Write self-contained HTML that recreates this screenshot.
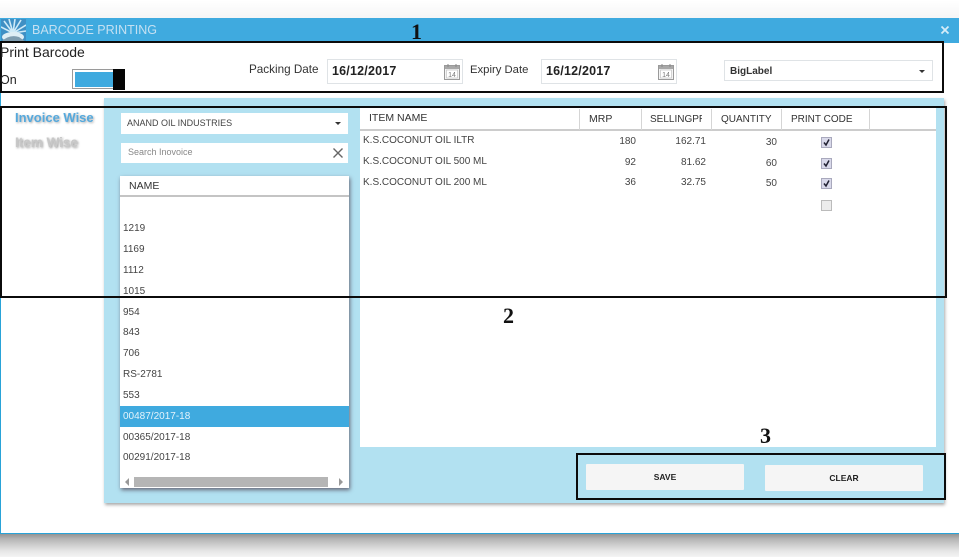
<!DOCTYPE html>
<html><head><meta charset="utf-8">
<style>
html,body{margin:0;padding:0;background:#fff}
body{width:959px;height:557px;overflow:hidden;position:relative;font-family:"Liberation Sans",sans-serif;color:#333}
#w{position:absolute;left:0;top:0;width:959px;height:557px;filter:blur(.35px)}
.a{position:absolute}
.t{position:absolute;white-space:nowrap;line-height:14px}
.box{position:absolute;border:2px solid #0b0b0b;box-sizing:border-box}
.f{position:absolute;background:#fff;border:1px solid #dfe3e6;box-sizing:border-box}
.b{font-family:"Liberation Serif",serif;font-weight:bold;font-size:22px;color:#111}
.r{font-size:10px;color:#444;left:123px}
.h{font-size:10.5px;color:#333}
.n{font-size:10px;color:#444;text-align:right;width:40px}
.item{font-size:10px;color:#444;left:363px}
.sep{position:absolute;width:1px;top:109px;height:21px;background:#d5d5d5}
.cb{position:absolute;left:821px;width:11px;height:11px;box-sizing:border-box;background:#d9d9ea;border:1px solid #a9a9bd}
.btn{position:absolute;background:#f5f5f5;height:26px;width:158px;border-radius:1px;text-align:center;font-size:8.5px;font-weight:bold;line-height:27px;color:#222}
</style></head><body><div id="w">
<div class="a" style="left:0;top:0;width:959px;height:18px;background:linear-gradient(#fff,#f5f5f6)"></div>
<div class="a" style="left:0;top:533px;width:959px;height:24px;background:linear-gradient(#8d8d8d,#b5b5b5 25%,#e6e6e6 75%,#f4f4f4)"></div>
<div class="a" style="left:0;top:18px;width:959px;height:516px;box-sizing:border-box;border:1px solid #29a3d8;border-right:none;background:#fff"></div>
<div class="a" style="left:0;top:18px;width:959px;height:25px;background:#3faadf"></div>
<svg class="a" style="left:1px;top:19px" width="25" height="23" viewBox="0 0 25 23">
<rect width="25" height="23" fill="#3f8fc4"/>
<path d="M12 14 L3 2 M12 14 L8 0 M12 14 L14 0 M12 14 L20 1 M12 14 L25 6 M12 14 L0 8 M12 14 L25 12" stroke="#cfeaf7" stroke-width="1.6"/>
<ellipse cx="12" cy="18" rx="11" ry="5" fill="#dfeef5"/>
<path d="M0 23 Q8 15 18 18 L25 23Z" fill="#7f9db0"/>
</svg>
<div class="t" style="left:32px;top:23px;font-size:12.5px;color:#c4e0f2">BARCODE PRINTING</div>
<svg class="a" style="left:940px;top:25px" width="10" height="10" viewBox="0 0 10 10"><path d="M1.5 1.5L8.5 8.5M8.5 1.5L1.5 8.5" stroke="#d5ecf8" stroke-width="1.8"/></svg>

<div class="t b" style="left:411px;top:25px">1</div>
<div class="box" style="left:0;top:41px;width:944px;height:52px"></div>

<div class="t" style="left:0;top:45px;font-size:14px;color:#222">Print Barcode</div>
<div class="t" style="left:0;top:73px;font-size:12.5px;color:#222">On</div>
<div class="a" style="left:72px;top:69px;width:50px;height:20px;border:1px solid #9a9a9a;box-sizing:border-box;background:#fff"></div>
<div class="a" style="left:75px;top:72px;width:40px;height:15px;background:#3faadf"></div>
<div class="a" style="left:113px;top:69px;width:12px;height:21px;background:#050505"></div>

<div class="t" style="left:249px;top:63px;font-size:11.7px;color:#333">Packing Date</div>
<div class="f" style="left:327px;top:59px;width:136px;height:25px"></div>
<div class="t" style="left:332px;top:64px;font-size:12.5px;font-weight:bold;letter-spacing:.2px;color:#222">16/12/2017</div>
<svg class="a" style="left:444px;top:63px" width="16" height="17" viewBox="0 0 16 17"><rect x="0.5" y="2.5" width="15" height="14" fill="#f4f4f4" stroke="#9a9a9a"/><rect x="1" y="3" width="14" height="3" fill="#a8a8a8"/><path d="M4 1v3M12 1v3" stroke="#888"/><rect x="2.5" y="7" width="11" height="8" fill="#fff" stroke="#bbb" stroke-width=".6"/><text x="8" y="14" font-size="7" text-anchor="middle" fill="#777" font-family="Liberation Sans">14</text></svg>
<div class="t" style="left:470px;top:63px;font-size:11.3px;color:#333">Expiry Date</div>
<div class="f" style="left:541px;top:59px;width:136px;height:25px"></div>
<div class="t" style="left:546px;top:64px;font-size:12.5px;font-weight:bold;letter-spacing:.2px;color:#222">16/12/2017</div>
<svg class="a" style="left:658px;top:63px" width="16" height="17" viewBox="0 0 16 17"><rect x="0.5" y="2.5" width="15" height="14" fill="#f4f4f4" stroke="#9a9a9a"/><rect x="1" y="3" width="14" height="3" fill="#a8a8a8"/><path d="M4 1v3M12 1v3" stroke="#888"/><rect x="2.5" y="7" width="11" height="8" fill="#fff" stroke="#bbb" stroke-width=".6"/><text x="8" y="14" font-size="7" text-anchor="middle" fill="#777" font-family="Liberation Sans">14</text></svg>
<div class="f" style="left:724px;top:60px;width:209px;height:21px"></div>
<div class="t" style="left:730px;top:65px;font-size:10px;font-weight:bold;color:#333">BigLabel</div>
<div class="a" style="left:919px;top:70px;border:3px solid transparent;border-top:3px solid #333;border-bottom:0"></div>

<!-- panel -->
<div class="a" style="left:104px;top:98px;width:840px;height:405px;background:#b2e1f1;box-shadow:1px 2px 3px #aaa"></div>
<div class="a" style="left:360px;top:108px;width:576px;height:339px;background:#fff"></div>

<div class="t" style="left:15px;top:111px;font-size:13px;font-weight:bold;color:#55a9dd;text-shadow:1px 1px 2px #aaa">Invoice Wise</div>
<div class="t" style="left:15px;top:136px;font-size:13.5px;font-weight:bold;color:#c8c8c8;text-shadow:1px 1px 2px #999">Item Wise</div>

<div class="a" style="left:121px;top:113px;width:227px;height:21px;background:#fff"></div>
<div class="t" style="left:127px;top:116px;font-size:9px;color:#444">ANAND OIL INDUSTRIES</div>
<div class="a" style="left:335px;top:122px;border:3px solid transparent;border-top:3px solid #333;border-bottom:0"></div>
<div class="a" style="left:121px;top:143px;width:227px;height:20px;background:#fff"></div>
<div class="t" style="left:128px;top:145px;font-size:9px;color:#888">Search Inovoice</div>
<svg class="a" style="left:332px;top:147px" width="12" height="12" viewBox="0 0 12 12"><path d="M1.5 1.5L10.5 10.5M10.5 1.5L1.5 10.5" stroke="#666" stroke-width="1.4"/></svg>

<!-- list -->
<div class="a" style="left:120px;top:176px;width:229px;height:312px;background:#fff;box-shadow:1px 2px 4px #667"></div>
<div class="a" style="left:120px;top:195px;width:229px;height:2px;background:#c4c4c4"></div>
<div class="t" style="left:129px;top:179px;font-size:10.5px;color:#333">NAME</div>
<div class="t r" style="top:222px">1219</div>
<div class="t r" style="top:243px">1169</div>
<div class="t r" style="top:264px">1112</div>
<div class="t r" style="top:285px">1015</div>
<div class="t r" style="top:306px">954</div>
<div class="t r" style="top:326px">843</div>
<div class="t r" style="top:347px">706</div>
<div class="t r" style="top:368px">RS-2781</div>
<div class="t r" style="top:389px">553</div>
<div class="a" style="left:120px;top:406px;width:229px;height:21px;background:#3faadf"></div>
<div class="t r" style="top:410px;color:#e4f3fb">00487/2017-18</div>
<div class="t r" style="top:431px">00365/2017-18</div>
<div class="t r" style="top:451px">00291/2017-18</div>
<div class="a" style="left:134px;top:477px;width:194px;height:10px;background:#b5b5b5"></div>
<div class="a" style="left:125px;top:478px;border:4px solid transparent;border-right:4px solid #999;border-left:0"></div>
<div class="a" style="left:339px;top:478px;border:4px solid transparent;border-left:4px solid #999;border-right:0"></div>

<!-- grid head -->
<div class="a" style="left:360px;top:129px;width:576px;height:2px;background:#ccc"></div>
<div class="sep" style="left:579px"></div><div class="sep" style="left:641px"></div><div class="sep" style="left:711px"></div><div class="sep" style="left:781px"></div><div class="sep" style="left:869px"></div>
<div class="t h" style="left:369px;top:111px">ITEM NAME</div>
<div class="t h" style="left:589px;top:112px">MRP</div>
<div class="t" style="left:650px;top:113px;font-size:10px;width:52px;overflow:hidden">SELLINGPRICE</div>
<div class="t" style="left:721px;top:113px;font-size:10px">QUANTITY</div>
<div class="t" style="left:791px;top:113px;font-size:10px">PRINT CODE</div>

<div class="t item" style="top:134px">K.S.COCONUT OIL ILTR</div>
<div class="t item" style="top:155px">K.S.COCONUT OIL 500 ML</div>
<div class="t item" style="top:176px">K.S.COCONUT OIL 200 ML</div>
<div class="t n" style="left:596px;top:135px">180</div><div class="t n" style="left:666px;top:135px">162.71</div><div class="t n" style="left:737px;top:136px">30</div>
<div class="t n" style="left:596px;top:156px">92</div><div class="t n" style="left:666px;top:156px">81.62</div><div class="t n" style="left:737px;top:157px">60</div>
<div class="t n" style="left:596px;top:176px">36</div><div class="t n" style="left:666px;top:176px">32.75</div><div class="t n" style="left:737px;top:177px">50</div>

<div class="cb" style="top:137px"><svg width="9" height="9" style="display:block"><path d="M2 4.5L4 7L7 1.5" fill="none" stroke="#223" stroke-width="1.5"/></svg></div>
<div class="cb" style="top:158px"><svg width="9" height="9" style="display:block"><path d="M2 4.5L4 7L7 1.5" fill="none" stroke="#223" stroke-width="1.5"/></svg></div>
<div class="cb" style="top:178px"><svg width="9" height="9" style="display:block"><path d="M2 4.5L4 7L7 1.5" fill="none" stroke="#223" stroke-width="1.5"/></svg></div>
<div class="cb" style="top:200px;background:#ececec;border-color:#bbb"></div>

<div class="box" style="left:0;top:106px;width:947px;height:192px"></div>
<div class="t b" style="left:503px;top:309px">2</div>
<div class="t b" style="left:760px;top:429px">3</div>

<div class="btn" style="left:586px;top:464px">SAVE</div>
<div class="btn" style="left:765px;top:465px">CLEAR</div>
<div class="box" style="left:576px;top:453px;width:370px;height:47px"></div>
</div></body></html>
